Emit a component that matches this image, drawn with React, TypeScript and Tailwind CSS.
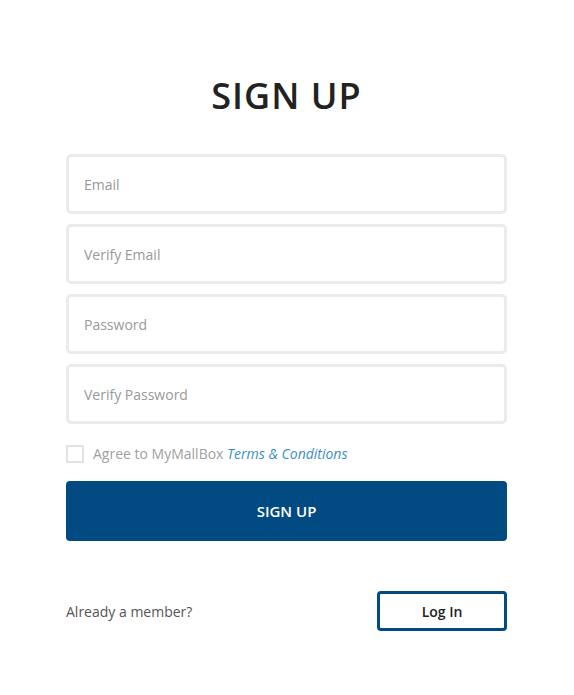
import React from "react"

const fields = ["Email", "Verify Email", "Password", "Verify Password"]

export default function App() {
  return (
    <div className="min-h-screen bg-white font-['Open_Sans',sans-serif]">
      <div className="ml-[66px] w-[441px] pt-[72px]">
        <h1 className="text-center text-[36px] font-semibold leading-[48px] tracking-[1px] text-[#222]">SIGN UP</h1>

        <div className="mt-[34px] flex flex-col gap-[10px]">
          {fields.map((f) => (
            <input
              key={f}
              placeholder={f}
              type={f.includes("Password") ? "password" : "text"}
              className="h-[60px] w-full rounded-[5px] border-[3px] border-[#ebebeb] bg-white px-[15px] text-[14px] text-[#333] outline-none placeholder:text-[#999]"
            />
          ))}
        </div>

        <label className="mt-[19px] flex items-center gap-[9px]">
          <span className="h-[18px] w-[18px] border-2 border-[#e2e2e2] bg-white" />
          <span className="text-[14px] text-[#a0a0a0]">
            Agree to MyMallBox{" "}
            <a className="text-[14px] italic text-[#3a8fc2]">Terms &amp; Conditions</a>
          </span>
        </label>

        <button className="mt-[17px] h-[60px] w-full rounded-[4px] bg-[#024a82] text-[15px] font-semibold text-white">
          SIGN UP
        </button>

        <div className="mt-[50px] flex items-center justify-between">
          <span className="text-[14px] text-[#555]">Already a member?</span>
          <button className="h-[40px] w-[130px] rounded-[4px] border-[3px] border-[#024a82] bg-white text-[14px] font-semibold text-[#222]">
            Log In
          </button>
        </div>
      </div>
    </div>
  )
}
